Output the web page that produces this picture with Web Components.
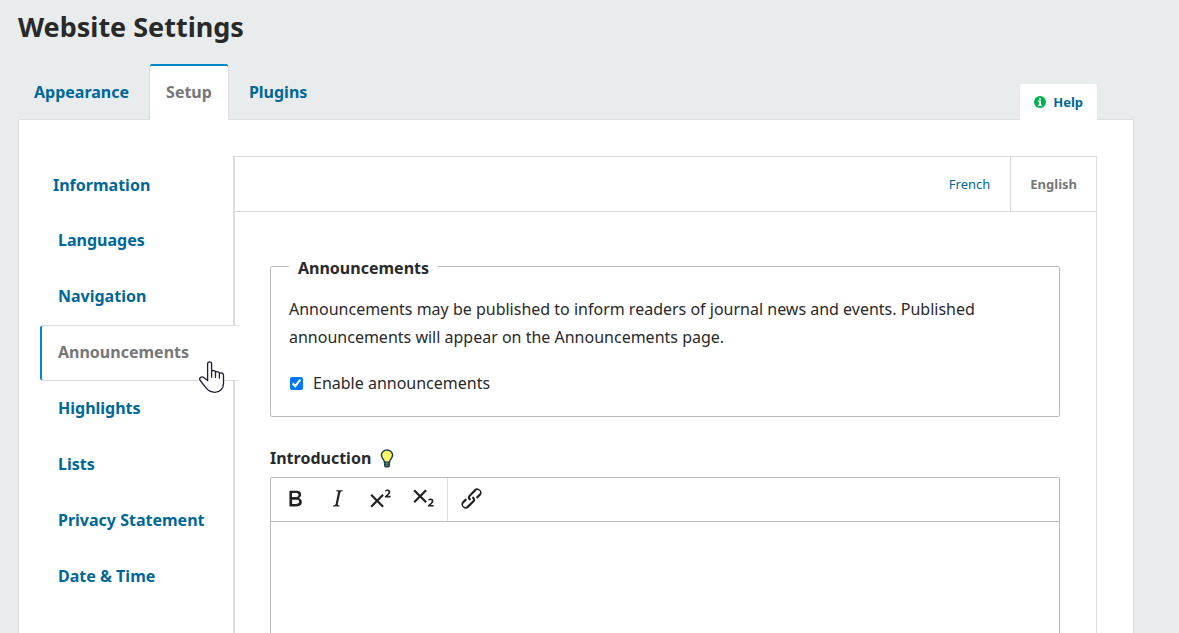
<!DOCTYPE html>
<html lang="en">
<head>
<meta charset="utf-8">
<meta name="viewport" content="width=device-width, initial-scale=1">
<title>Website Settings</title>
<style>
  :root {
    --page: #e8eced;
    --link: #006798;
    --accent: #0088c9;
    --muted: #777;
    --line: #ddd;
    --field-line: #bbb;
  }
  body {
    margin: 0;
    background: var(--page);
    color: #292929;
    font: 16px/24px "Noto Sans", "Open Sans", sans-serif;
  }
</style>
</head>
<body>
<settings-page>
  <h1 slot="title">Website Settings</h1>
  <settings-tab slot="tabs">Appearance</settings-tab>
  <settings-tab slot="tabs" active>Setup</settings-tab>
  <settings-tab slot="tabs">Plugins</settings-tab>
  <help-button slot="help">Help</help-button>
  <side-nav slot="nav">
    <side-item lead>Information</side-item>
    <side-item>Languages</side-item>
    <side-item>Navigation</side-item>
    <side-item active>Announcements<hand-cursor slot="pointer"></hand-cursor></side-item>
    <side-item>Highlights</side-item>
    <side-item>Lists</side-item>
    <side-item>Privacy Statement</side-item>
    <side-item>Date &amp; Time</side-item>
  </side-nav>
  <locale-bar>
    <locale-button>French</locale-button>
    <locale-button active>English</locale-button>
  </locale-bar>
  <announcements-form></announcements-form>
</settings-page>

<script>
function define(name, markup) {
  const template = document.createElement('template');
  template.innerHTML = markup;
  customElements.define(name, class extends HTMLElement {
    constructor() {
      super();
      this.attachShadow({ mode: 'open' }).append(template.content.cloneNode(true));
    }
  });
}

define('settings-page', `
  <style>
    :host { display: flex; flex-direction: column; box-sizing: border-box; min-height: 100vh; padding: 9px 45px 0 18px; }
    ::slotted(h1) { margin: 0; font-size: 27px; line-height: 36px; font-weight: 700; }
    .top { display: flex; align-items: flex-end; margin: 19px 0 -1px; position: relative; z-index: 1; }
    .tabs { display: flex; gap: 4px; flex: 1; }
    .help { margin-right: 37px; }
    .panel { flex: 1; display: flex; background: #fff; border: 1px solid var(--line); border-bottom: 0; border-radius: 2px 2px 0 0; padding: 36px 36px 0 21px; }
    .content { flex: 1; min-width: 0; display: flex; flex-direction: column; border: 1px solid var(--line); border-width: 1px 1px 0 2px; }
  </style>
  <slot name="title"></slot>
  <div class="top">
    <nav class="tabs" aria-label="Settings sections"><slot name="tabs"></slot></nav>
    <div class="help"><slot name="help"></slot></div>
  </div>
  <main class="panel">
    <slot name="nav"></slot>
    <div class="content"><slot></slot></div>
  </main>`);

define('settings-tab', `
  <style>
    :host { display: block; }
    button { display: block; height: 56px; padding: 0 16px; border: 0; background: none; color: var(--link); font: inherit; font-weight: 700; cursor: pointer; }
    :host([active]) button { background: #fff; color: var(--muted); border: 1px solid var(--line); border-width: 0 1px; box-shadow: inset 0 2px var(--accent); border-radius: 2px 2px 0 0; }
  </style>
  <button type="button"><slot></slot></button>`);

define('help-button', `
  <style>
    :host { display: block; }
    button { display: flex; align-items: center; gap: 6px; height: 36px; padding: 0 14px; border: 0; border-radius: 2px 2px 0 0; background: #fff; color: var(--link); font: inherit; font-size: 13px; font-weight: 700; cursor: pointer; }
    svg { display: block; }
  </style>
  <button type="button">
    <svg width="13" height="13" viewBox="0 0 13 13" aria-hidden="true"><circle cx="6" cy="6" r="6" fill="#00b24e"/><path fill="#fff" d="M5 2h2v1.600H5zM4 4.500h3v4.300h1v1.300H4V8.800h1V5.800H4z"/></svg>
    <slot></slot>
  </button>`);

define('side-nav', `
  <style>:host { display: block; width: 193px; flex: none; padding-top: 1px; }</style>
  <nav aria-label="Setup"><slot></slot></nav>`);

define('side-item', `
  <style>
    :host { display: block; position: relative; }
    a { display: flex; align-items: center; box-sizing: border-box; height: 56px; padding: 0 0 2px 18px; color: var(--link); font-weight: 700; text-decoration: none; }
    :host([lead]) a { padding: 0 0 0 13px; }
    :host([active]) { margin-right: -6px; }
    :host([active]) a { color: var(--muted); background: #fff; border: 1px solid var(--line); border-width: 1px 0; box-shadow: inset 2px 0 var(--accent); border-radius: 2px; }
    ::slotted(hand-cursor) { position: absolute; left: 159px; top: 36px; }
  </style>
  <a href="#"><slot></slot></a><slot name="pointer"></slot>`);

define('hand-cursor', `
  <style>:host { display: block; pointer-events: none; } svg { display: block; }</style>
  <svg width="26" height="33" viewBox="0 0 26 33" aria-hidden="true"><path fill="#fff" stroke="#211d30" stroke-width="1.3" stroke-linejoin="round" d="M8.600 19.600V2.800C8.600.1 12.600.1 12.600 2.800v7.100c1.600-.7 3.600-.1 3.900 1 1.600-.6 3.500-.1 3.900 1.100 2-.6 4.100.2 4.100 2.300v8.200c0 5.100-3.500 8.800-8.600 8.800-4.300 0-6.900-1.800-9.100-4.600L1.300 19.500c-1.900-2.500 1-4.400 3.400-3.100z"/><path fill="none" stroke="#211d30" stroke-width="1.3" stroke-linecap="round" d="M12.600 9.900v6.300M16.500 11v5.500M20.400 12.100v5.100"/></svg>`);

define('locale-bar', `
  <style>:host { display: flex; justify-content: flex-end; height: 54px; border-bottom: 1px solid var(--line); }</style>
  <slot></slot>`);

define('locale-button', `
  <style>
    :host { display: flex; }
    button { padding: 0 20px; border: 0; background: none; color: var(--link); font: inherit; font-size: 13px; cursor: pointer; }
    :host([active]) button { padding: 0 19px; color: var(--muted); font-weight: 700; border-left: 1px solid var(--line); }
  </style>
  <button type="button"><slot></slot></button>`);

define('announcements-form', `
  <style>
    :host { flex: 1; display: flex; flex-direction: column; padding: 40px 36px 0 35px; }
    fieldset { margin: 0; padding: 15px 18px 19px; border: 1px solid var(--field-line); border-radius: 2px; }
    legend { padding: 4px 9px 0; font-weight: 700; }
    p { margin: 0 0 18px; line-height: 28px; }
    .check { display: flex; align-items: center; gap: 10px; line-height: 28px; }
    .check input { margin: 0 0 0 1px; width: 13px; height: 13px; }
    .caption { display: flex; align-items: center; gap: 9px; margin: 29px 0 7px; font-weight: 700; }
    .caption svg { display: block; }
    rich-editor { flex: 1; }
  </style>
  <fieldset>
    <legend>Announcements</legend>
    <p>Announcements may be published to inform readers of journal news and events. Published announcements will appear on the Announcements page.</p>
    <div class="check"><input type="checkbox" id="enable" checked><label for="enable">Enable announcements</label></div>
  </fieldset>
  <div class="caption"><span>Introduction</span>
    <svg width="14" height="19" viewBox="0 0 14 19" aria-hidden="true"><path fill="#fff86b" stroke="#18414d" stroke-width="1.5" d="M4.500 13.200C4.500 10.700 1.400 9.400 1.400 6.200a5.600 5.300 0 0 1 11.200 0c0 3.200-3.100 4.500-3.100 7z"/><path fill="#18414d" d="M4 12.800h6v3.700q0 2.100-3 2.100t-3-2.100z"/><path stroke="#a9bd6b" stroke-width=".8" d="M5.500 14.200h3M5.500 16.200h3"/></svg>
  </div>
  <rich-editor></rich-editor>`);

define('rich-editor', `
  <style>
    :host { display: flex; flex-direction: column; border: 1px solid var(--field-line); border-bottom: 0; border-radius: 2px 2px 0 0; }
    .bar { display: flex; height: 43px; border-bottom: 1px solid var(--field-line); }
    .group { display: flex; padding: 0 2px; }
    .group + .group { border-left: 1px solid var(--line); }
    button { display: flex; align-items: center; padding: 0 8px 2px; border: 0; background: none; cursor: pointer; }
    svg { display: block; width: 27px; height: 27px; fill: #222; fill-rule: evenodd; }
    textarea { flex: 1; min-height: 96px; padding: 12px; border: 0; outline: 0; resize: none; background: transparent; font: inherit; color: inherit; }
  </style>
  <div class="bar" role="toolbar" aria-label="Formatting">
    <div class="group">
      <button type="button" aria-label="Bold"><svg viewBox="0 0 24 24"><path d="M8.300 19c-.3 0-.5 0-.6-.2l-.2-.5V5.700c0-.2 0-.4.2-.5l.6-.2h5c1.500 0 2.700.3 3.500 1 .7.6 1.100 1.400 1.100 2.500a3 3 0 0 1-.6 1.900c-.4.6-1 1-1.600 1.200.4.1.9.3 1.300.6s.8.7 1 1.200c.4.4.5 1 .5 1.600 0 1.300-.4 2.300-1.300 3-.8.7-2.100 1-3.800 1H8.300zm5-8.300c.6 0 1.200-.1 1.600-.5.4-.3.6-.7.6-1.300 0-1.100-.8-1.700-2.300-1.700H9.800v3.500h3.400zm.5 6c.7 0 1.300-.1 1.700-.4.4-.4.6-.9.6-1.500s-.2-1-.7-1.400c-.4-.3-1-.4-2-.4H9.900v3.800h4z"/></svg></button>
      <button type="button" aria-label="Italic"><svg viewBox="0 0 24 24"><path d="M16.700 4.700l-.1.9h-.3c-.6 0-1 0-1.400.3-.3.3-.4.6-.5 1.100l-2.100 9.800v.6c0 .5.4.8 1.400.8h.2l-.2.8H8l.2-.8h.2c1.100 0 1.800-.5 2-1.500l2-9.800.1-.5c0-.6-.4-.8-1.400-.8h-.3l.2-.9h5.800z"/></svg></button>
      <button type="button" aria-label="Superscript"><svg viewBox="0 0 24 24"><path d="M15 9.400L10.400 14l4.600 4.600-1.400 1.400L9 15.400 4.400 20 3 18.600 7.600 14 3 9.400 4.400 8 9 12.600 13.600 8 15 9.400zm5.900 1.600h-5v-1l1-.8 1.700-1.600c.3-.5.5-.9.5-1.300 0-.3 0-.5-.2-.7-.2-.2-.5-.3-.9-.3l-.8.2-.7.4-.4-1.200c.2-.2.5-.4 1-.5.3-.2.8-.2 1.200-.2.8 0 1.400.2 1.800.6.4.4.6 1 .6 1.600 0 .5-.2 1-.5 1.500l-1.300 1.400-.6.5h2.600V11z"/></svg></button>
      <button type="button" aria-label="Subscript"><svg viewBox="0 0 24 24"><path d="M10.400 10l4.600 4.600-1.400 1.400L9 11.400 4.400 16 3 14.600 7.600 10 3 5.400 4.400 4 9 8.600 13.600 4 15 5.400 10.400 10zM21 19h-5v-1l1-.8 1.700-1.600c.4-.4.5-.8.5-1.200 0-.3 0-.6-.2-.7-.2-.2-.5-.3-.9-.3a2 2 0 0 0-.8.2l-.7.3-.4-1.100 1-.6 1.200-.2c.8 0 1.400.3 1.800.7.4.4.6.9.6 1.500s-.2 1.100-.5 1.600a8 8 0 0 1-1.300 1.300l-.6.6h2.600V19z"/></svg></button>
    </div>
    <div class="group">
      <button type="button" aria-label="Insert link"><svg viewBox="0 0 24 24"><path d="M6.200 12.300a1 1 0 0 1 1.400 1.400l-2 2a2 2 0 1 0 2.600 2.800l4.800-4.800a1 1 0 0 0 0-1.400 1 1 0 1 1 1.400-1.300 2.900 2.900 0 0 1 0 4L9.600 20a3.900 3.900 0 0 1-5.500-5.500l2-2zm11.600-.6a1 1 0 0 1-1.400-1.400l2-2a2 2 0 1 0-2.600-2.800L11 10.300a1 1 0 0 0 0 1.400A1 1 0 1 1 9.600 13a2.900 2.900 0 0 1 0-4L14.400 4a3.900 3.900 0 0 1 5.500 5.500l-2 2z"/></svg></button>
    </div>
  </div>
  <textarea aria-label="Introduction"></textarea>`);
</script>
</body>
</html>
